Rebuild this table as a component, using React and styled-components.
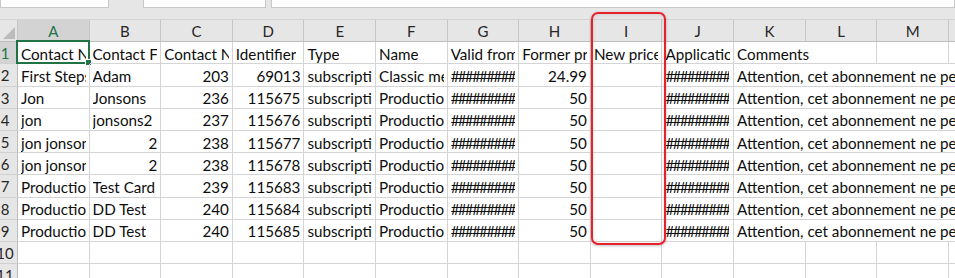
import React from "react";
import styled, { createGlobalStyle } from "styled-components";

const GlobalStyle = createGlobalStyle`
  html, body {
    margin: 0;
    padding: 0;
    background: #ffffff;
  }
`;

const COLS = ["A", "B", "C", "D", "E", "F", "G", "H", "I", "J", "K", "L", "M", ""];
const HASH = "#########";
const NOTE = "Attention, cet abonnement ne peut pas être modifié";

// each row: [A, B, C, D, E, F, G, H, I, J, K]; numbers are right aligned
const ROWS = [
  ["Contact Name", "Contact First Name", "Contact Number", "Identifier", "Type", "Name", "Valid from", "Former price", "New price", "Application date", "Comments"],
  ["First Steps", "Adam", 203, 69013, "subscription", "Classic membership", HASH, 24.99, "", HASH, NOTE],
  ["Jon", "Jonsons", 236, 115675, "subscription", "Production plan", HASH, 50, "", HASH, NOTE],
  ["jon", "jonsons2", 237, 115676, "subscription", "Production plan", HASH, 50, "", HASH, NOTE],
  ["jon jonsons", 2, 238, 115677, "subscription", "Production plan", HASH, 50, "", HASH, NOTE],
  ["jon jonsons", 2, 238, 115678, "subscription", "Production plan", HASH, 50, "", HASH, NOTE],
  ["Production", "Test Card", 239, 115683, "subscription", "Production plan", HASH, 50, "", HASH, NOTE],
  ["Production", "DD Test", 240, 115684, "subscription", "Production plan", HASH, 50, "", HASH, NOTE],
  ["Production", "DD Test", 240, 115685, "subscription", "Production plan", HASH, 50, "", HASH, NOTE],
];

const Window = styled.div`
  position: relative;
  width: 955px;
  height: 278px;
  overflow: hidden;
  background: #e6e6e6;
  font-family: Lato, "Liberation Sans", sans-serif;
`;

const FormulaBar = styled.div`
  display: flex;
  height: 20px;
  background: #e6e6e6;
  border-bottom: 1px solid #d4d4d4;
  box-sizing: border-box;
`;

const Field = styled.div`
  height: 8px;
  width: ${(p) => p.$w || "auto"};
  flex: ${(p) => (p.$grow ? 1 : "none")};
  margin-left: ${(p) => p.$ml || "0px"};
  background: #ffffff;
  border: 1px solid #c8c8c8;
  border-top: none;
  box-sizing: border-box;
`;

const Grid = styled.div`
  display: grid;
  grid-template-columns: 18px repeat(13, 71.62px) 1fr;
  grid-auto-rows: 22.2px;
  background: #ffffff;
`;

const Corner = styled.div`
  position: relative;
  background: #e6e6e6;
  border-right: 1px solid #c6c6c6;
  border-bottom: 1px solid #bdbdbd;

  &::after {
    content: "";
    position: absolute;
    right: 2px;
    bottom: 2px;
    border-style: solid;
    border-width: 0 0 12px 12px;
    border-color: transparent transparent #bcbcbc transparent;
  }
`;

const ColHead = styled.div`
  display: flex;
  align-items: center;
  justify-content: center;
  background: ${(p) => (p.$active ? "#d3d3d3" : "#e6e6e6")};
  color: ${(p) => (p.$active ? "#217346" : "#262626")};
  border-right: 1px solid #c6c6c6;
  border-bottom: ${(p) => (p.$active ? "2px solid #217346" : "1px solid #bdbdbd")};
  font-size: 15px;
  padding-top: 1px;
  box-sizing: border-box;
`;

const RowHead = styled.div`
  display: flex;
  align-items: center;
  background: ${(p) => (p.$active ? "#d3d3d3" : "#e6e6e6")};
  color: ${(p) => (p.$active ? "#217346" : "#262626")};
  border-right: ${(p) => (p.$active ? "2px solid #217346" : "1px solid #bdbdbd")};
  border-bottom: 1px solid #d0d0d0;
  font-size: 15px;
  padding-top: 1px;
  box-sizing: border-box;
  overflow: hidden;

  span {
    width: 10px;
    white-space: nowrap;
    display: flex;
    justify-content: center;
  }
`;

const Cell = styled.div`
  position: relative;
  display: flex;
  align-items: center;
  justify-content: ${(p) => (p.$num ? "flex-end" : "flex-start")};
  grid-column: ${(p) => (p.$span ? `span ${p.$span}` : "auto")};
  padding: 2px 3px 0 3px;
  border-right: 1px solid #d4d4d4;
  border-bottom: 1px solid #d4d4d4;
  box-sizing: border-box;
  overflow: ${(p) => (p.$selected ? "visible" : "hidden")};
  white-space: nowrap;
  font-size: 15.2px;
  letter-spacing: ${(p) => (p.$hash ? "-1.7px" : "0")};
  color: #0d0d0d;
`;

const Clip = styled.span`
  overflow: hidden;
  white-space: nowrap;
  max-width: 100%;
`;

// green outline + fill handle of the active cell
const Selection = styled.div`
  position: absolute;
  left: -2px;
  top: -2px;
  right: -1px;
  bottom: -1px;
  border: 2px solid #217346;
  pointer-events: none;

  &::after {
    content: "";
    position: absolute;
    right: -4px;
    bottom: -4px;
    width: 5px;
    height: 5px;
    background: #217346;
    border: 1px solid #ffffff;
  }
`;

// hand-drawn red frame around column I
const Highlight = styled.div`
  position: absolute;
  left: 591px;
  top: 12px;
  width: 75px;
  height: 233px;
  border: 2px solid #e8202a;
  border-radius: 7px;
  box-sizing: border-box;
  box-shadow: 0 1px 3px rgba(0, 0, 0, 0.25), inset 0 0 4px rgba(0, 0, 0, 0.12);
  pointer-events: none;
`;

function DataRow({ index, values }) {
  const filled = values.slice(0, 10);
  const comment = values[10];
  const isHeader = index === 1;
  return (
    <>
      <RowHead $active={index === 1}>
        <span>{index}</span>
      </RowHead>
      {filled.map((v, i) => (
        <Cell
          key={i}
          $num={typeof v === "number"}
          $hash={v === HASH}
          $selected={index === 1 && i === 0}
        >
          <Clip>{v}</Clip>
          {index === 1 && i === 0 && <Selection />}
        </Cell>
      ))}
      {isHeader ? (
        <>
          {/* "Comments" spills over the empty L cell */}
          <Cell $span={2}>{comment}</Cell>
          <Cell />
          <Cell />
        </>
      ) : (
        <Cell $span={4}>{comment}</Cell>
      )}
    </>
  );
}

function EmptyRow({ index }) {
  return (
    <>
      <RowHead>
        <span>{index}</span>
      </RowHead>
      {COLS.map((c, i) => (
        <Cell key={i} />
      ))}
    </>
  );
}

export default function App() {
  return (
    <>
      <GlobalStyle />
      <Window>
        <FormulaBar>
          <Field $w="109px" />
          <Field $w="123px" $ml="34px" />
          <Field $grow $ml="5px" />
        </FormulaBar>
        <Grid>
          <Corner />
          {COLS.map((c, i) => (
            <ColHead key={i} $active={c === "A"}>
              {c}
            </ColHead>
          ))}
          {ROWS.map((r, i) => (
            <DataRow key={i} index={i + 1} values={r} />
          ))}
          <EmptyRow index={10} />
          <EmptyRow index={11} />
        </Grid>
        <Highlight />
      </Window>
    </>
  );
}
